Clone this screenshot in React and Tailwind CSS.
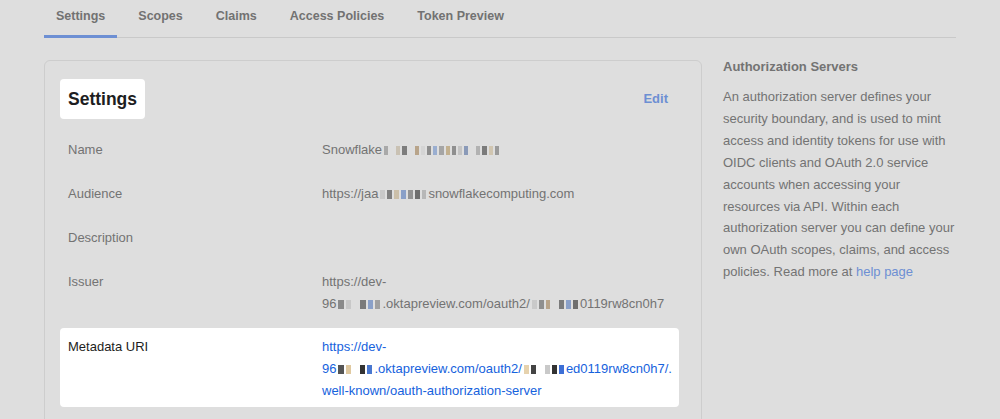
import React from "react";

const font = { fontFamily: '"Liberation Sans", Arial, sans-serif' };

// pixelated (censored) fragments, drawn as little colour cells
function Pix({ cells, className }) {
    return (
        <span className={"inline-flex items-center align-middle h-[12px] gap-[2px] px-[2px] " + className}>
            {cells.map((c, i) => (
                <span key={i} className="inline-block flex-1 h-[9px]" style={{ background: c }} />
            ))}
        </span>
    );
}

const a = ["#a9a9a9", "#dedede", "#c9c1b3", "#7d7d7d", "#dedede", "#b8a48a", "#d4d4d4", "#8d8d8d", "#9aaed0", "#a5a5a5", "#c2b08f"];
const b = ["#8f8f8f", "#c4c4c4", "#8a9ab8", "#dedede", "#b2b2b2", "#7b7b7b", "#d0c5b0", "#9a9a9a"];
const c = ["#c8c8c8", "#7f7f7f", "#cbbfa9", "#8aa0c8", "#939393", "#6f6f6f", "#b7b7b7"];

function Tab({ label, active }) {
    return (
        <div
            className={
                "px-3 pt-[7px] pb-[10px] text-[12.5px] font-bold leading-[18px] text-[#727272] " +
                (active ? "border-b-[3px] border-[#6d8fd3] -mb-px" : "")
            }
        >
            {label}
        </div>
    );
}

function Row({ label, children }) {
    return (
        <div className="flex px-2 py-[11px] text-[13px] leading-[22px] text-[#737373]">
            <div className="w-[254px] shrink-0">{label}</div>
            <div>{children}</div>
        </div>
    );
}

export default function App() {
    return (
        <div className="w-[1000px] h-[419px] overflow-hidden bg-[#dedede]" style={font}>
            <div className="ml-[44px] w-[912px] flex gap-[9px] border-b border-[#c9c9c9]">
                <Tab label="Settings" active />
                <Tab label="Scopes" />
                <Tab label="Claims" />
                <Tab label="Access Policies" />
                <Tab label="Token Preview" />
            </div>

            <div className="ml-[44px] mt-[18px] flex gap-[21px]">
                <div className="mt-[4px] w-[658px] h-[400px] shrink-0 rounded-md border border-[#cdcdcd] pt-[18px] pl-[15px] pr-[22px]">
                    <div className="flex items-center justify-between">
                        <div className="bg-white rounded-[4px] h-[40px] px-2 flex items-center text-[17.5px] font-bold text-[#1d1d21]">
                            Settings
                        </div>
                        <div className="text-[13px] font-bold text-[#6d8fd3] pr-[11px]">Edit</div>
                    </div>

                    <div className="mt-[9px]">
                        <Row label="Name">
                            Snowflake
                            <Pix cells={a.concat(b)} className="w-[119px]" />
                        </Row>
                        <Row label="Audience">
                            https://jaa
                            <Pix cells={c} className="w-[50px]" />
                            snowflakecomputing.com
                        </Row>
                        <Row label="Description"> </Row>
                        <Row label="Issuer">
                            <span className="block">https://dev-</span>
                            <span className="block whitespace-nowrap">
                                96
                                <Pix cells={["#8a8a8a", "#c8c8c8", "#dedede", "#7a7a7a", "#8aa0c8", "#a0a0a0"]} className="w-[46px]" />
                                .oktapreview.com/oauth2/
                                <Pix cells={["#c9c9c9", "#8f8f8f", "#b8a48a", "#dedede", "#7b7b7b", "#8aa0c8", "#6f6f6f"]} className="w-[50px]" />
                                0119rw8cn0h7
                            </span>
                        </Row>
                    </div>

                    <div className="mt-[2px] bg-white rounded-[4px] flex px-2 pt-[8px] pb-[5px] text-[13px] leading-[22px]">
                        <div className="w-[254px] shrink-0 text-[#1d1d21]">Metadata URI</div>
                        <div className="text-[#1662dd]">
                            <span className="block">https://dev-</span>
                            <span className="block whitespace-nowrap">
                                96
                                <Pix cells={["#555555", "#e0c9a0", "#ffffff", "#333333", "#4a78d0"]} className="w-[38px]" />
                                .oktapreview.com/oauth2/
                                <Pix cells={["#e6d2ad", "#444444", "#ffffff", "#c9c9c9", "#333333", "#3d6fd6"]} className="w-[44px]" />
                                ed0119rw8cn0h7/.
                            </span>
                            <span className="block">well-known/oauth-authorization-server</span>
                        </div>
                    </div>
                </div>

                <div className="w-[234px] text-[13px] leading-[22px] text-[#737373]">
                    <div className="font-bold">Authorization Servers</div>
                    <p className="mt-[8px] leading-[21.9px]">
                        An authorization server defines your
                        <br />
                        security boundary, and is used to mint
                        <br />
                        access and identity tokens for use with
                        <br />
                        OIDC clients and OAuth 2.0 service
                        <br />
                        accounts when accessing your
                        <br />
                        resources via API. Within each
                        <br />
                        authorization server you can define your
                        <br />
                        own OAuth scopes, claims, and access
                        <br />
                        policies. Read more at <span className="text-[#6d8fd3]">help page</span>
                    </p>
                </div>
            </div>
        </div>
    );
}
